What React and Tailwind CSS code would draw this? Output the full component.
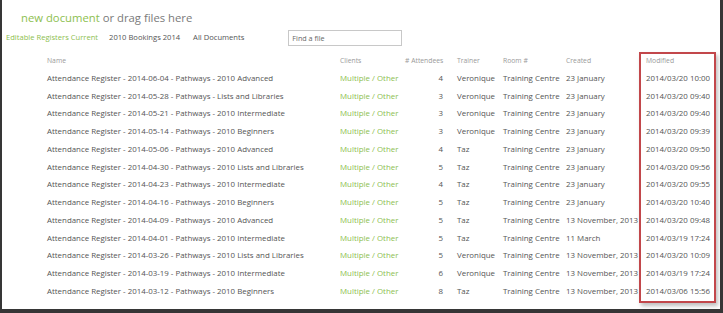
const rows = [
  ['Attendance Register - 2014-06-04 - Pathways - 2010 Advanced', 4, 'Veronique', '23 January', '2014/03/20 10:00'],
  ['Attendance Register - 2014-05-28 - Pathways - Lists and Libraries', 3, 'Veronique', '23 January', '2014/03/20 09:40'],
  ['Attendance Register - 2014-05-21 - Pathways - 2010 Intermediate', 3, 'Veronique', '23 January', '2014/03/20 09:40'],
  ['Attendance Register - 2014-05-14 - Pathways - 2010 Beginners', 3, 'Veronique', '23 January', '2014/03/20 09:39'],
  ['Attendance Register - 2014-05-06 - Pathways - 2010 Advanced', 4, 'Taz', '23 January', '2014/03/20 09:50'],
  ['Attendance Register - 2014-04-30 - Pathways - 2010 Lists and Libraries', 5, 'Taz', '23 January', '2014/03/20 09:56'],
  ['Attendance Register - 2014-04-23 - Pathways - 2010 Intermediate', 4, 'Taz', '23 January', '2014/03/20 09:55'],
  ['Attendance Register - 2014-04-16 - Pathways - 2010 Beginners', 5, 'Taz', '23 January', '2014/03/20 10:40'],
  ['Attendance Register - 2014-04-09 - Pathways - 2010 Advanced', 5, 'Taz', '13 November, 2013', '2014/03/20 09:48'],
  ['Attendance Register - 2014-04-01 - Pathways - 2010 Intermediate', 5, 'Taz', '11 March', '2014/03/19 17:24'],
  ['Attendance Register - 2014-03-26 - Pathways - 2010 Lists and Libraries', 5, 'Veronique', '13 November, 2013', '2014/03/20 10:09'],
  ['Attendance Register - 2014-03-19 - Pathways - 2010 Intermediate', 6, 'Veronique', '13 November, 2013', '2014/03/19 17:24'],
  ['Attendance Register - 2014-03-12 - Pathways - 2010 Beginners', 8, 'Taz', '13 November, 2013', '2014/03/06 15:56'],
]

const cols = 'grid grid-cols-[293px_65px_38px_14px_46px_63px_80px_1fr] items-center whitespace-nowrap'

export default function App() {
  return (
    <div className="relative w-[723px] h-[313px] bg-white border-l-2 border-r-[3px] border-b-4 border-[#363636] overflow-hidden font-['Open_Sans',sans-serif]">
      {/* header */}
      <div className="h-[29px] pl-[19px] pt-[8px] text-[11.3px] leading-[19px] text-[#7a7a7a]">
        <span className="text-[#8dc04f]">new document</span> or drag files here
      </div>

      {/* views + search */}
      <div className="flex items-center h-[18px] pl-[4px] text-[7.6px] text-[#555]">
        <span className="text-[#8dc04f]">Editable Registers Current</span>
        <span className="ml-[11px]">2010 Bookings 2014</span>
        <span className="ml-[13px]">All Documents</span>
        <div className="ml-[44px] w-[114px] h-[16px] border border-[#c8c8c8] flex items-center pl-[3px] text-[7.2px] text-[#666]">
          Find a file
        </div>
      </div>

      {/* table */}
      <div className="pl-[45px] pt-[6px] text-[7.9px] text-[#555]">
        <div className={cols + ' h-[17px] text-[6.8px] text-[#9a9a9a]'}>
          <span>Name</span>
          <span>Clients</span>
          <span className="text-right">#&nbsp;Attendees</span>
          <span />
          <span>Trainer</span>
          <span>Room #</span>
          <span>Created</span>
          <span>Modified</span>
        </div>
        {rows.map((r, i) => (
          <div key={i} className={cols + ' h-[17.75px]'}>
            <span>{r[0]}</span>
            <span className="text-[#8dc04f]">Multiple / Other</span>
            <span className="text-right">{r[1]}</span>
            <span />
            <span>{r[2]}</span>
            <span>Training Centre</span>
            <span>{r[3]}</span>
            <span>{r[4]}</span>
          </div>
        ))}
      </div>

      {/* highlight box */}
      <div className="absolute left-[637px] top-[52px] w-[77px] h-[251px] border-2 border-[#c2474b] shadow-[2px_3px_4px_rgba(0,0,0,0.25)]" />
    </div>
  )
}
